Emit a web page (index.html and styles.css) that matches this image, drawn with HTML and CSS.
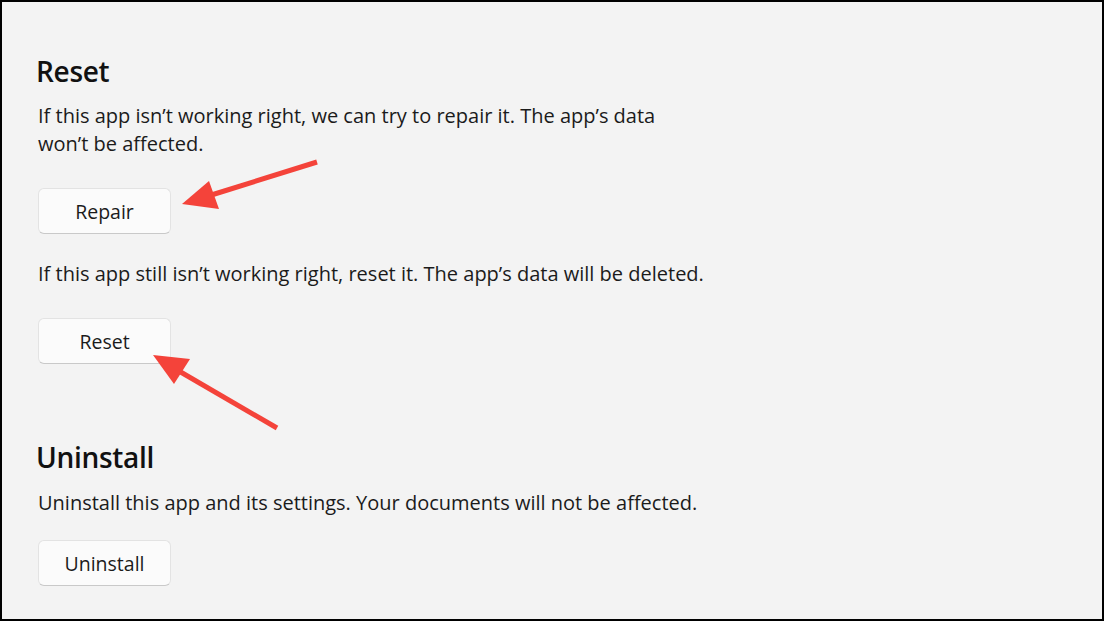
FILE: index.html
```html
<!DOCTYPE html>
<html lang="en">
<head>
  <meta charset="UTF-8" />
  <title>App settings</title>
  <link rel="stylesheet" href="styles.css">
</head>
<body>
  <div class="frame">
    <section class="group">
      <h2>Reset</h2>
      <p class="first">If this app isn’t working right, we can try to repair it. The app’s data<br>won’t be affected.</p>
      <button type="button">Repair</button>
      <p>If this app still isn’t working right, reset it. The app’s data will be deleted.</p>
      <button type="button">Reset</button>
    </section>

    <section class="group uninstall">
      <h2>Uninstall</h2>
      <p class="first">Uninstall this app and its settings. Your documents will not be affected.</p>
      <button type="button" class="tight">Uninstall</button>
    </section>

    <!-- annotation arrows drawn over the page -->
    <svg class="arrows" width="1104" height="621" viewBox="0 0 1104 621">
      <line x1="317" y1="162" x2="205" y2="197" />
      <polygon points="182,204 209,181 219,209" />
      <line x1="277" y1="428" x2="172" y2="367" />
      <polygon points="153,355 190,359 174,384" />
    </svg>
  </div>
</body>
</html>
```

FILE: styles.css
```css
html, body {
  margin: 0;
  padding: 0;
}
body {
  font-family: "Open Sans", "Noto Sans", sans-serif;
  color: #1b1b1b;
  background: #f3f3f3;
}
.frame {
  position: relative;
  box-sizing: border-box;
  width: 1104px;
  height: 621px;
  border: 2px solid #000;
  padding: 51px 0 0 34px;
  background: #f3f3f3;
  overflow: hidden;
}
.group h2 {
  margin: 0;
  font-size: 28px;
  line-height: 36px;
  font-weight: 600;
  letter-spacing: -0.3px;
  color: #111;
}
.group p {
  margin: 26px 0 0 2px;
  font-size: 20px;
  line-height: 28px;
}
.group p.first {
  margin-top: 13px;
}
.group button {
  display: block;
  margin: 30px 0 0 2px;
  width: 133px;
  height: 46px;
  font-family: inherit;
  font-size: 19.5px;
  color: #1b1b1b;
  background: #fbfbfb;
  border: 1px solid #e3e3e3;
  border-bottom-color: #c9c9c9;
  border-radius: 6px;
  cursor: pointer;
}
.group button.tight {
  margin-top: 23px;
}
.uninstall {
  margin-top: 75px;
}
.uninstall p.first {
  margin-top: 14px;
}
.arrows {
  position: absolute;
  left: -2px;
  top: -2px;
  pointer-events: none;
}
.arrows line {
  stroke: #f4433a;
  stroke-width: 5;
}
.arrows polygon {
  fill: #f4433a;
}
```
